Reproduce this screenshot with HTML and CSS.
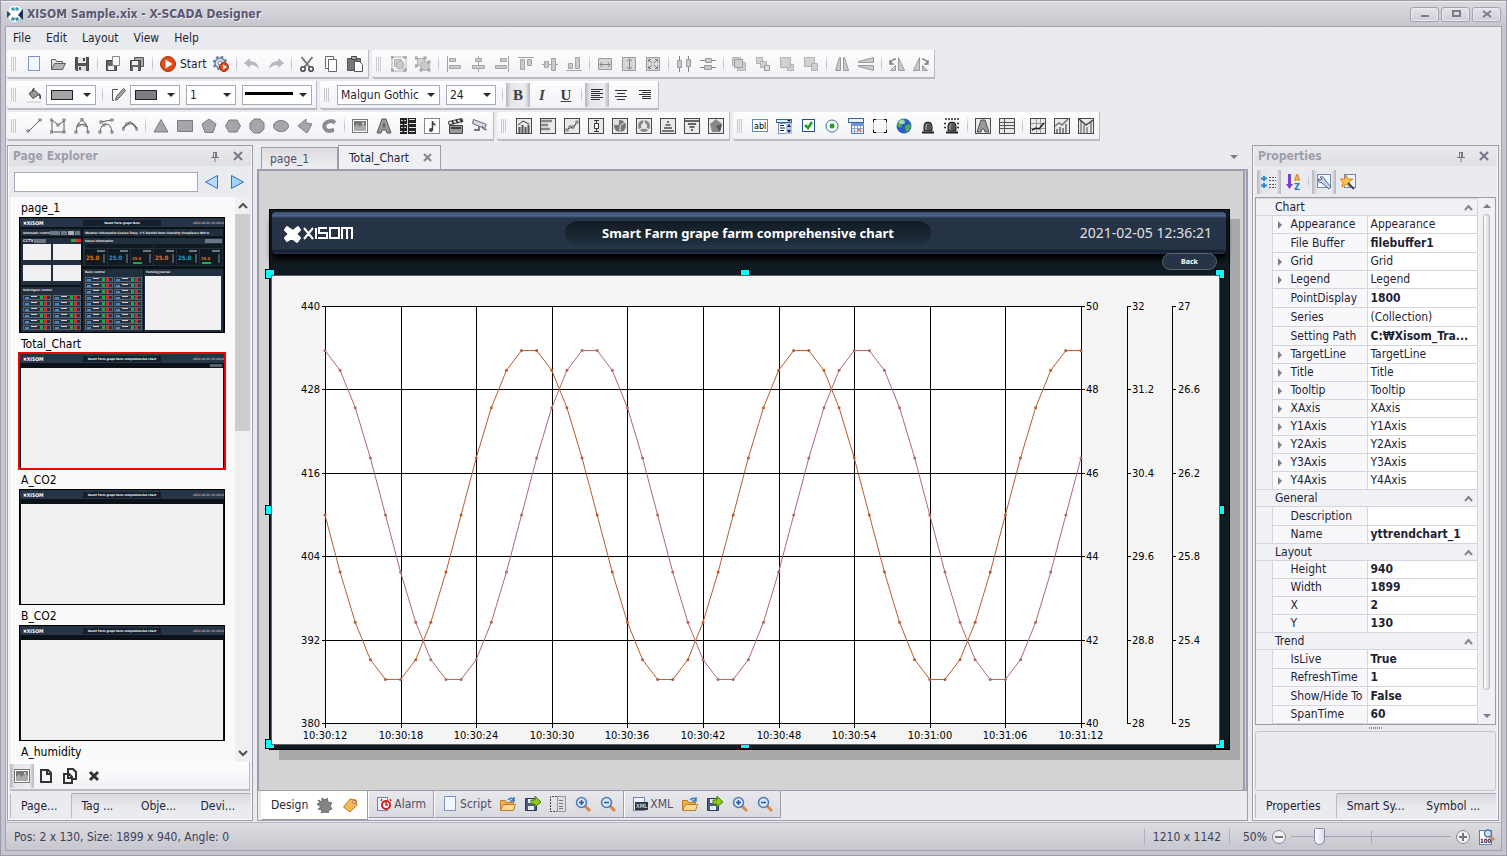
FILE: index.html
```html
<!DOCTYPE html>
<html lang="en">
<head>
<meta charset="UTF-8" />
<meta name="viewport" content="width=device-width, initial-scale=1" />
<title>XISOM Sample.xix - X-SCADA Designer</title>
<link rel="stylesheet" href="styles.css">
</head>
<body>

<div class="window">
  <header class="titlebar">
    <svg class="app-icon" width="16" height="16" viewBox="0 0 16 16"><path d="M5 0h6l3 3-1 10-4 3H6l-4-3V3z" fill="#fff"/><path d="M4 2l3-1 1 3-3 1zM9 1l3 1-1 3-3-1z" fill="#3aa0b8"/><path d="M4 14l3 1 1-3-3-1zM9 15l3-1-1-3-3 1z" fill="#2f8fae"/><path d="M0 5l4 3-4 4z" fill="#1d4b86"/><path d="M16 3v11l-5-5z" fill="#16305e"/></svg>
    <h1>XISOM Sample.xix - X-SCADA Designer</h1>
    <div class="window-buttons">
      <button aria-label="Minimize"><svg width="10" height="8"><path d="M1 6h8" stroke="#7b7b8b" stroke-width="2"/></svg></button>
      <button aria-label="Maximize"><svg width="10" height="8"><rect x="2" y="1" width="7" height="5" fill="none" stroke="#7b7b8b" stroke-width="2"/></svg></button>
      <button aria-label="Close"><svg width="10" height="8"><path d="M1 1l8 6M9 1L1 7" stroke="#7b7b8b" stroke-width="2"/></svg></button>
    </div>
  </header>

  <div class="client">
    <nav class="menu">
      <button>File</button><button>Edit</button><button>Layout</button><button>View</button><button>Help</button>
    </nav>

    <div class="toolbar-row">
      <div class="toolbar" data-icons="new open save | copyPage saveAll | start gear | undo redo | cut copy paste"></div>
      <div class="toolbar dim" data-icons="group ungroup | alignLeft alignCenter alignRight alignTop alignMiddle alignBottom | sameWidth sameHeight sameSize | spaceH spaceV | toFront forward front backward | flipH flipV | rotateLeft rotateRight"></div>
    </div>

    <div class="toolbar-row">
      <div class="toolbar">
        <span class="grip"></span>
        <button class="tool" aria-label="Fill colour" data-icon="bucket"></button>
        <span class="combo color"><select aria-label="Fill"><option></option></select><i class="swatch"></i></span>
        <span class="sep"></span>
        <button class="tool" aria-label="Line colour" data-icon="pencil"></button>
        <span class="combo color"><select aria-label="Line"><option></option></select><i class="swatch dark"></i></span>
        <span class="combo size"><select aria-label="Line width"><option>1</option></select></span>
        <span class="combo line"><select aria-label="Line style"><option></option></select><i class="stroke"></i></span>
      </div>
      <div class="toolbar">
        <span class="grip"></span>
        <span class="combo font"><select aria-label="Font"><option>Malgun Gothic</option></select></span>
        <span class="combo size"><select aria-label="Font size"><option>24</option></select></span>
        <span class="sep"></span>
        <button class="tool letter on"><b>B</b></button>
        <button class="tool letter"><em>I</em></button>
        <button class="tool letter"><u>U</u></button>
        <span class="sep"></span>
        <button class="tool on" aria-label="Left" data-icon="textLeft"></button>
        <button class="tool" aria-label="Center" data-icon="textCenter"></button>
        <button class="tool" aria-label="Right" data-icon="textRight"></button>
      </div>
    </div>

    <div class="toolbar-row">
      <div class="toolbar" data-icons="line polyline curve bezier arc | triangle rect pentagon hexagon octagon ellipse shape pie | image text qr sound movie camera"></div>
      <div class="toolbar" data-icons="chartBar chartRows chartLine chartBox chartPie chartDonut chartPyramid chartFunnel chartRadar"></div>
      <div class="toolbar" data-icons="textbox combobox check radio calendar frame globe alarm alarmOn | labelA table | trend area chartV"></div>
    </div>

    <main class="main">
      <section class="panel explorer">
        <header class="panel-head"><h2>Page Explorer</h2><button aria-label="Pin" data-icon="pin"></button><button aria-label="Close" data-icon="close"></button></header>
        <div class="search">
          <input type="text" aria-label="Search pages">
          <button aria-label="Previous" data-icon="prev"></button>
          <button aria-label="Next" data-icon="next"></button>
        </div>
        <div class="list-wrap">
          <div class="pages" id="pages"></div>
          <div class="vscroll">
            <svg width="10" height="8"><path d="M1 6l4-4 4 4" fill="none" stroke="#505050" stroke-width="2"/></svg>
            <i class="thumb"></i>
            <svg class="down" width="10" height="8"><path d="M1 2l4 4 4-4" fill="none" stroke="#505050" stroke-width="2"/></svg>
          </div>
        </div>
        <div class="page-tools">
          <button class="tool on" aria-label="Preview" data-icon="image"></button>
          <button class="tool" aria-label="New page" data-icon="pageNew"></button>
          <button class="tool" aria-label="Duplicate" data-icon="pageCopy"></button>
          <button class="tool" aria-label="Delete" data-icon="pageDelete"></button>
        </div>
        <div class="dock-tabs">
          <button class="active">Page...</button><button>Tag ...</button><button>Obje...</button><button>Devi...</button>
        </div>
      </section>

      <section class="document">
        <div class="doc-tabs">
          <button class="doc-tab">page_1</button>
          <button class="doc-tab active">Total_Chart <svg width="9" height="9"><path d="M1 1l7 7M8 1L1 8" stroke="#85858f" stroke-width="2"/></svg></button>
          <i class="arrow"></i>
        </div>
        <div class="surface">
          <div class="screen">
            <div class="screen-head">
              <svg class="brand" width="70" height="20" viewBox="0 0 70 20"><path d="M3 4l6 4 5-4 2 3-4 4 4 4-3 4-5-4-5 3-2-3 4-4-4-4z" fill="#fff" stroke="#fff" stroke-width="2" stroke-linejoin="round"/><path d="M20 5l9 11M29 5L20 16M32 5v11M43 5h-8v5h8v5h-9M46 5h9v10h-9zM58 16V5h10v11M63 6v10" fill="none" stroke="#fff" stroke-width="2"/></svg>
              <div class="screen-title">Smart Farm grape farm comprehensive chart</div>
              <time>2021-02-05 12:36:21</time>
            </div>
            <button class="back">Back</button>
            <i class="handle tl"></i><i class="handle tc"></i><i class="handle tr"></i>
            <i class="handle ml"></i><i class="handle mr"></i>
            <i class="handle bl"></i><i class="handle bc"></i><i class="handle br"></i>
            <svg class="chart" id="chart" width="949" height="470" viewBox="1 1 947 468"></svg>
          </div>
        </div>
        <div class="view-tabs">
          <div class="view-tab active"><button>Design</button><button aria-label="Settings" data-icon="gearGrey"></button><button aria-label="Tag" data-icon="tag"></button></div>
          <div class="view-tab"><button><span data-icon="alarmDoc"></span>Alarm</button></div>
          <div class="view-tab"><button><span data-icon="new"></span>Script</button><button aria-label="Open" data-icon="folder"></button><button aria-label="Export" data-icon="export"></button><button aria-label="Outline" data-icon="outline"></button><button aria-label="Zoom in" data-icon="zoomIn"></button><button aria-label="Zoom out" data-icon="zoomOut"></button></div>
          <div class="view-tab"><button><span data-icon="xml"></span>XML</button><button aria-label="Open" data-icon="folder"></button><button aria-label="Export" data-icon="export"></button><button aria-label="Zoom in" data-icon="zoomIn"></button><button aria-label="Zoom out" data-icon="zoomOut"></button></div>
        </div>
      </section>

      <section class="panel properties">
        <header class="panel-head"><h2>Properties</h2><button aria-label="Pin" data-icon="pin"></button><button aria-label="Close" data-icon="close"></button></header>
        <div class="prop-tools">
          <button class="tool on" aria-label="Categories" data-icon="categories"></button>
          <button class="tool" aria-label="Sort" data-icon="sortAZ"></button>
          <span class="sep"></span>
          <button class="tool on" aria-label="Properties" data-icon="wrench"></button>
          <button class="tool" aria-label="Events" data-icon="wand"></button>
        </div>
        <div class="prop-wrap">
          <table class="props" id="props"></table>
          <div class="prop-scroll"><i class="arrow up"></i><i class="thumb"></i><i class="arrow"></i></div>
        </div>
        <div class="splitter"></div>
        <div class="description"></div>
        <div class="dock-tabs">
          <button class="active">Properties</button><button>Smart Sy...</button><button>Symbol ...</button>
        </div>
      </section>
    </main>

    <footer class="status">
      <span>Pos: 2 x 130, Size: 1899 x 940, Angle: 0</span>
      <span class="dims">1210 x 1142</span>
      <label for="zoom">50%</label>
      <button aria-label="Zoom out" data-icon="minus"></button>
      <input type="range" id="zoom" min="0" max="320" value="50">
      <button aria-label="Zoom in" data-icon="plus"></button>
      <button aria-label="Actual size" data-icon="zoom100"></button>
    </footer>
  </div>
</div>

<script src="script.js"></script>
</body>
</html>
```
FILE: styles.css
```css
* {
  box-sizing: border-box;
}
body {
  margin: 0;
  font-family: "DejaVu Sans Condensed", "DejaVu Sans", "Noto Sans", sans-serif;
  font-stretch: condensed;
  font-size: 12px;
  line-height: 16px;
  color: #1f1f35;
}
button,
input,
select {
  font: inherit;
  color: inherit;
}
button {
  display: flex;
  align-items: center;
  justify-content: center;
  margin: 0;
  padding: 0;
  border: 0;
  background: none;
  white-space: nowrap;
}
svg {
  display: block;
  flex: none;
}
.window {
  display: flex;
  flex-direction: column;
  height: 100vh;
  min-height: 700px;
  padding: 0 4px 4px;
  border: 1px solid #9c9aa9;
  background: #c6c6d0;
  overflow: hidden;
}
.titlebar {
  display: flex;
  align-items: center;
  height: 25px;
  margin: 0 -4px;
  padding: 0 5px 0 6px;
  border-top: 1px solid #f0f0f4;
  background: linear-gradient(#d9d9de, #c6c6ce);
}
.titlebar h1 {
  flex: 1;
  margin: 0 0 0 4px;
  font-size: 12px;
  color: #5b5870;
  text-shadow: 1px 1px 0 #ededf2;
}
.window-buttons {
  display: flex;
  gap: 2px;
}
.window-buttons button {
  width: 29px;
  height: 15px;
  border: 1px solid #a3a3b0;
  border-radius: 3px;
  background: linear-gradient(#e4e4e9, #cfcfd7);
  box-shadow: inset 0 0 0 1px #eaeaef;
}

.client {
  flex: 1;
  min-height: 0;
  display: flex;
  flex-direction: column;
  border: 1px solid #a3a3b0;
  background: #eaebef;
}
.menu {
  display: flex;
  gap: 15px;
  height: 23px;
  padding: 0 7px 2px;
}
.toolbar-row {
  display: flex;
  gap: 3px;
  margin: 0 0 2px 1px;
}
.toolbar {
  display: flex;
  align-items: center;
  height: 29px;
  padding-right: 1px;
  border-right: 1px solid #b9bac4;
  border-bottom: 2px solid #b9bac4;
  border-radius: 3px 0 0 3px;
  background: linear-gradient(#fdfdfe, #f1f2f5);
}
.grip {
  width: 6px;
  height: 14px;
  margin: 0 5px 0 4px;
  background: repeating-linear-gradient(90deg, #c9c9d1 0, #c9c9d1 1px, #f8f8fa 1px, #f8f8fa 2px);
}
.tool {
  width: 24px;
  height: 24px;
}
.tool.on {
  background: linear-gradient(90deg, #b5b5c1, #e4e4ea 20%, #ececf1 80%, #b5b5c1);
}
.tool.wide {
  width: 53px;
  gap: 4px;
  justify-content: flex-start;
  padding-left: 4px;
}
.dim .tool {
  opacity: 0.75;
}
.letter {
  font-family: "Liberation Serif", serif;
  font-size: 15px;
  font-weight: bold;
  color: #404040;
}
.sep {
  width: 1px;
  height: 16px;
  margin: 0 3px;
  background: linear-gradient(#eee, #b9bac4, #eee);
}
.combo {
  position: relative;
  display: flex;
  width: 50px;
  height: 20px;
  margin-right: 6px;
}
.combo.color {
  margin-right: 3px;
}
.combo.size {
  margin-left: 3px;
}
.combo.font + .size {
  margin: 0 3px 0 0;
}
.combo.line {
  width: 70px;
  margin-right: 3px;
}
.combo.font {
  width: 103px;
  margin-left: 2px;
}
.combo select {
  appearance: none;
  width: 100%;
  padding: 0 3px;
  border: 1px solid #a9aab8;
  border-radius: 0;
  background: #fff;
}
.combo::after,
.arrow {
  width: 0;
  border: 4px solid transparent;
  border-top-color: #2a2a3c;
  border-bottom: 0;
}
.combo::after {
  content: "";
  position: absolute;
  right: 5px;
  top: 8px;
}
.swatch,
.stroke {
  position: absolute;
  left: 5px;
  top: 5px;
  width: 22px;
  height: 10px;
  border: 1px solid #1f1f35;
  background: #a5a5a5;
}
.swatch.dark {
  background: #7f7f7f;
}
.stroke {
  left: 3px;
  top: 7px;
  width: 48px;
  height: 3px;
  border: 0;
  background: #000;
}

.main {
  flex: 1;
  min-height: 0;
  display: flex;
  gap: 4px;
  margin-top: 2px;
  padding: 0 2px 0 1px;
}
.panel {
  display: flex;
  flex-direction: column;
  flex: none;
  width: 246px;
  padding: 0 2px 2px;
  border: 1px solid #9c9cab;
  box-shadow: inset 0 0 0 1px #f8f8fa;
}
.panel-head {
  display: flex;
  align-items: center;
  height: 20px;
  margin: 0 -1px;
  padding: 0 2px 0 4px;
  background: linear-gradient(#e9e9ed, #dfe0e4);
}
.panel-head h2 {
  flex: 1;
  margin: 0;
  font-size: 12px;
  color: #9d9eab;
}
.panel-head button {
  width: 23px;
}
.search {
  display: flex;
  align-items: center;
  height: 31px;
  padding-left: 4px;
}
.search input {
  width: 184px;
  height: 20px;
  border: 1px solid #a9aab8;
  background: #fff;
}
.search button {
  width: 25px;
  margin-left: 1px;
}
.list-wrap {
  flex: 1;
  min-height: 0;
  display: flex;
  background: #fafafa;
}
.pages {
  flex: 1;
  padding: 2px 0 0 9px;
  overflow: hidden;
}
.page {
  display: block;
  margin-bottom: 2px;
}
.page span {
  display: block;
  height: 18px;
  padding: 1px 0 0 2px;
  text-align: left;
  color: #000;
}
.page svg {
  outline: 1px solid #000;
  outline-offset: -1px;
}
.page.selected svg {
  outline: 2px solid #f00000;
}
.vscroll {
  display: flex;
  flex-direction: column;
  align-items: center;
  width: 15px;
  padding: 5px 0;
  background: #f0f0f0;
}
.vscroll .thumb {
  width: 15px;
  height: 217px;
  margin-top: 4px;
  background: #cdcdcd;
}
.vscroll .down {
  margin-top: auto;
}
.page-tools {
  display: flex;
  align-items: center;
  height: 29px;
  border-right: 1px solid #b9bac4;
  border-bottom: 2px solid #b9bac4;
  background: linear-gradient(#fdfdfe, #f1f2f5);
}
.dock-tabs {
  display: flex;
  height: 25px;
  margin-top: 2px;
}
.dock-tabs button {
  flex: 1;
  justify-content: flex-start;
  padding: 0 0 1px 10px;
  border-top: 1px solid #a9aab8;
  background: linear-gradient(#d9d9df, #eaebef 60%);
}
.dock-tabs .active {
  border-top-color: transparent;
  border-right: 1px solid #b9bac4;
  border-left: 1px solid #b9bac4;
  background: #eaebef;
}

.document {
  flex: 1;
  min-width: 0;
  display: flex;
  flex-direction: column;
}
.doc-tabs {
  display: flex;
  align-items: flex-end;
  height: 24px;
  padding-left: 4px;
}
.doc-tab {
  width: 77px;
  height: 22px;
  justify-content: flex-start;
  padding-left: 8px;
  border: 1px solid #9c9cab;
  border-bottom: 0;
  background: linear-gradient(#dcdce1, #eeeff2);
  color: #50506a;
}
.doc-tab.active {
  width: 103px;
  height: 24px;
  gap: 14px;
  padding-left: 10px;
  background: #f0f0f3;
  color: #1f1f35;
}
.doc-tabs .arrow {
  margin: 0 10px 10px auto;
}
.arrow {
  border-top-color: #7b7b8b;
}
.surface {
  flex: 1;
  min-height: 0;
  padding: 38px 0 0 10px;
  border: 2px solid #9c9cab;
  border-right: 5px double #9c9cab;
  border-bottom-width: 1px;
  background: #d3d3d3;
  overflow: hidden;
}
.screen {
  position: relative;
  width: 961px;
  height: 541px;
  padding: 2px 3px 0 2px;
  border: 1px solid #000;
  background: #111c22;
  box-shadow: 10px 10px 0 #a9a9a9;
}
.screen-head {
  display: grid;
  grid-template-columns: 1fr 366px 1fr;
  align-items: center;
  height: 42px;
  padding: 0 14px 0 12px;
  border-radius: 4px;
  background: linear-gradient(#3c5173, #4b648c 4px, #273346 6px, #273346 37px, #131c2b 39px, #26344c);
  box-shadow: 0 6px 6px #000;
  color: #fff;
}
.screen-title {
  height: 24px;
  border-radius: 12px;
  background: linear-gradient(#111b23, #203040);
  font: bold 13px/24px "Noto Sans", sans-serif;
  text-align: center;
}
.screen-head time {
  justify-self: end;
  font: 14px/24px "Noto Sans", sans-serif;
  color: #e0e0e0;
}
.back {
  position: absolute;
  right: 12px;
  top: 43px;
  width: 55px;
  height: 17px;
  border: 1px solid #5c6470;
  border-radius: 9px;
  background: #273346;
  color: #fff;
  font: bold 7px/8px "Noto Sans", sans-serif;
}
.chart {
  position: absolute;
  left: 1px;
  top: 65px;
  border: 1px solid #606060;
  background: #f4f4f4;
  font-size: 11px;
}
.handle {
  position: absolute;
  width: 10px;
  height: 10px;
  border: 1px solid #000;
  background: #0ff;
}
.tl, .ml, .bl {
  left: -5px;
}
.tc, .bc {
  left: 470px;
}
.tr, .mr, .br {
  left: 945px;
}
.tl, .tc, .tr {
  top: 59px;
}
.ml, .mr {
  top: 295px;
}
.bl, .bc, .br {
  top: 529px;
}
.view-tabs {
  display: flex;
  height: 30px;
  padding: 0 0 2px 3px;
  border: 1px solid #9c9cab;
  border-top: 0;
}
.view-tab {
  display: flex;
  align-items: center;
  gap: 9px;
  height: 27px;
  padding: 0 7px;
  border: 1px solid #9c9cab;
  border-top: 0;
  border-left-color: #fff;
  background: linear-gradient(#e8e8ec, #d9dadf);
  color: #50506a;
}
.view-tab button {
  gap: 2px;
}
.view-tab.active {
  height: 29px;
  padding: 0 9px;
  background: #fff;
  color: #1f1f35;
}

.properties {
  width: 247px;
}
.prop-tools {
  display: flex;
  align-items: center;
  height: 31px;
  padding-left: 2px;
}
.prop-wrap {
  flex: 1;
  min-height: 0;
  display: flex;
  border: 1px solid #9c9cab;
  background: #f0f1f4;
  overflow: hidden;
}
.props {
  width: 100%;
  min-width: 0;
  align-self: flex-start;
  table-layout: fixed;
  border-collapse: collapse;
}
.props td,
.props th {
  height: 18px;
  padding: 0;
  border: 1px solid #d5d6dd;
  font-weight: normal;
  text-align: left;
  line-height: 17px;
  white-space: nowrap;
  overflow: hidden;
}
.props .tall td,
.props .tall th {
  height: 19px;
}
.props .gutter {
  border-top: 0;
  border-bottom: 0;
  border-left: 0;
}
.props .name {
  position: relative;
  padding-left: 18px;
  background: #f8f8fb;
}
.props .value {
  padding-left: 3px;
  background: #fff;
}
.props .group th {
  position: relative;
  height: 17px;
  padding-left: 19px;
  border-left: 0;
  line-height: 16px;
}
.group svg {
  position: absolute;
  right: 4px;
  top: 5px;
}
.name.more::before {
  content: "";
  position: absolute;
  left: 5px;
  top: 5px;
  border: 4px solid transparent;
  border-left-color: #7b7b8b;
  border-right: 0;
}
.prop-scroll {
  display: flex;
  flex-direction: column;
  flex: none;
  align-items: center;
  width: 17px;
  padding: 6px 0;
}
.prop-scroll .thumb {
  flex: 1;
  width: 7px;
  margin: 6px 0 24px;
  border: 1px solid #b5b5c1;
  border-radius: 4px;
  background: linear-gradient(90deg, #fff, #d9d9df);
}
.arrow.up {
  border-top: 0;
  border-bottom: 4px solid #7b7b8b;
}
.splitter {
  height: 6px;
  width: 14px;
  margin: 0 auto;
  border: solid transparent;
  border-width: 2px 0;
  background: repeating-linear-gradient(90deg, #8d8d9b 0, #8d8d9b 1px, #eaebef 1px, #eaebef 2px) padding-box;
}
.description {
  height: 60px;
  border: 1px solid #c4c5ce;
  border-radius: 3px;
}

.status {
  display: flex;
  align-items: center;
  height: 28px;
  margin-top: 1px;
  padding: 0 2px 0 8px;
  border-top: 1px solid #b5b5c1;
  background: linear-gradient(#dcdce1, #c6c6ce);
  color: #3f3f58;
}
.dims {
  margin: 0 13px 0 auto;
  padding: 0 8px;
  border: solid #b0b0bc;
  border-width: 0 1px;
}
.status button {
  margin: 0 4px;
}
.status input {
  appearance: none;
  width: 160px;
  height: 18px;
  margin: 0;
  background: linear-gradient(#a9a9b5, #a9a9b5) center / 100% 1px no-repeat, linear-gradient(#a9a9b5, #a9a9b5) center / 1px 12px no-repeat;
}
.status input::-webkit-slider-thumb {
  appearance: none;
  width: 11px;
  height: 17px;
  background: linear-gradient(90deg, #fff, #d8def5);
  border: 1px solid #85859b;
  border-radius: 2px 2px 6px 6px;
}
```
FILE: script.js
```js
const D = '#5f5f5f';
const G = '#a6a6aa';

function box(inner) {
  return `<rect x=".5" y=".5" width="15" height="15" fill="#e9e9e9" stroke="#4a4a4a"/>${inner}`;
}
function sq(x, y) {
  return `<rect x="${x}" y="${y}" width="2" height="2" fill="#fff" stroke="#555" stroke-width=".8"/>`;
}
function lines(d, color, width, dash) {
  return `<path d="${d}" fill="none" stroke="${color || D}" stroke-width="${width || 1}"${dash ? ` stroke-dasharray="${dash}"` : ''}/>`;
}
function solid(d, fill, stroke) {
  return `<path d="${d}" fill="${fill || G}" stroke="${stroke || '#7c7c80'}"/>`;
}
function lens(sign) {
  return `<path d="M10 10l5 5" stroke="#d98a4a" stroke-width="3"/><circle cx="6.5" cy="6.5" r="5" fill="#d5e6fb" stroke="#5577ad" stroke-width="1.5"/>${lines(sign, '#2454a8', 1.5)}`;
}
function two(a, b) {
  return solid(a, '#c4c4c4', '#9a9a9a') + solid(b, '#c4c4c4', '#9a9a9a');
}
const bell = '<path d="M4 13V8a4 4 0 018 0v5z" fill="#555" stroke="#222"/><path d="M6 12V8l1-2" stroke="#bbb" fill="none"/><path d="M2 14.5h12" stroke="#222" stroke-width="2"/>';

const icons = {
  new: '<rect x="2.5" y=".5" width="11" height="14" fill="#f3f7ff" stroke="#8094cc"/>',
  open: solid('M1.5 13V3.5h4l1 2h6V8', '#e4e4e4', D) + solid('M1.5 13.5l3-6h11l-3 6z', '#b5b5b5', D),
  save: solid('M1.5 1.5h13v13h-12l-1-1z', '#555', '#444') + '<path d="M4 1h8v6H4z" fill="#e6e6e6"/><path d="M4 10h8v5H4z" fill="#ddd"/><path d="M5 11h2v3H5zM9 2h2v3H9z" fill="#444"/>',
  copyPage: solid('M1.5 4.5h10v10h-10z', '#666', '#444') + '<path d="M3 10h6v4H3z" fill="#eee"/>' + solid('M7.5 .5h7v9h-7z', '#f6f6f6', '#888'),
  saveAll: solid('M5.5 1.5h9v9h-9z', '#aaa', '#555') + solid('M1.5 4.5h10v10h-10z', '#666', '#444') + '<path d="M3 5h6v4H3zM4 11h5v4H4z" fill="#eee"/>',
  start: '<circle cx="8" cy="8" r="7.5" fill="#e04a1c" stroke="#a03010"/><path d="M5.5 3.5l7 4.5-7 4.5z" fill="#fff"/>',
  gear: '<circle cx="7" cy="7" r="5" fill="#dce4f0" stroke="#6f7f99" stroke-width="1.5"/><circle cx="7" cy="7" r="6.3" fill="none" stroke="#6f7f99" stroke-width="2" stroke-dasharray="2.5 2.45"/><circle cx="7" cy="7" r="2" fill="#fff" stroke="#6f7f99"/><circle cx="11" cy="11" r="4.5" fill="#e04a1c" stroke="#a03010"/><path d="M10 8.5l4 2.5-4 2.5z" fill="#fff"/>',
  undo: '<path d="M6 2v3q8 0 9 8-3-4-9-4v3L0 7z" fill="#b9b9bd"/>',
  redo: '<path d="M10 2v3Q2 5 1 13q3-4 9-4v3l6-5z" fill="#b9b9bd"/>',
  cut: lines('M2.5 1l8 10M13.5 1l-8 10', '#777', 2) + '<circle cx="4" cy="13" r="2.2" fill="none" stroke="#444" stroke-width="1.5"/><circle cx="12" cy="13" r="2.2" fill="none" stroke="#444" stroke-width="1.5"/>',
  copy: solid('M2.5 .5h8v12h-8z', '#fff', '#666') + solid('M5.5 3.5h8v12h-8z', '#fff', '#666'),
  paste: solid('M.5 2.5h13v12H.5z', '#777', '#555') + solid('M4.5 .5h5v3h-5z', '#aaa', '#444') + solid('M7.5 5.5h5l3 3v7h-8z', '#fff', '#555'),

  group: solid('M3.5 3.5h7v7h-7z', '#c9c9c9', '#999') + '<circle cx="9" cy="9" r="4" fill="#bbb" stroke="#999"/>' + lines('M1 1h14v14H1z', '#999') + sq(0, 0) + sq(13, 0) + sq(0, 13) + sq(13, 13),
  ungroup: solid('M2.5 2.5h7v7h-7z', '#c9c9c9', '#999') + '<circle cx="10" cy="10" r="4.5" fill="#bbb" stroke="#999"/>' + sq(0, 1) + sq(9, 1) + sq(0, 9) + sq(13, 5) + sq(5, 13) + sq(13, 13),
  alignLeft: lines('M1.5 0v16', '#888') + solid('M3.5 2.5h6v3h-6zM3.5 9.5h11v3h-11z', '#bbb', '#8a8a8a'),
  alignCenter: lines('M8.5 0v16', '#888') + solid('M5.5 2.5h6v3h-6zM2.5 9.5h12v3h-12z', '#bbb', '#8a8a8a'),
  alignRight: lines('M14.5 0v16', '#888') + solid('M6.5 2.5h6v3h-6zM1.5 9.5h11v3h-11z', '#bbb', '#8a8a8a'),
  alignTop: lines('M0 1.5h16', '#888') + solid('M2.5 3.5h4v10h-4zM9.5 3.5h4v6h-4z', '#bbb', '#8a8a8a'),
  alignMiddle: lines('M0 8.5h16', '#888') + solid('M2.5 5.5h4v6h-4zM9.5 2.5h4v12h-4z', '#bbb', '#8a8a8a'),
  alignBottom: lines('M0 14.5h16', '#888') + solid('M2.5 7.5h4v5h-4zM9.5 1.5h4v11h-4z', '#bbb', '#8a8a8a'),
  sameWidth: solid('M1.5 2.5h13v11h-13z', '#ccc') + lines('M3 8.5h10M5 6L3 8.5 5 11M11 6l2 2.5-2 2.5'),
  sameHeight: solid('M1.5 1.5h13v13h-13z', '#ccc') + lines('M8.5 3v10M6 5l2.5-2L11 5M6 11l2.5 2 2.5-2'),
  sameSize: solid('M1.5 1.5h13v13h-13z', '#ccc') + lines('M4 4l3 3M12 4L9 7M4 12l3-3M12 12L9 9M3.5 6V3.5H6M10 3.5h2.5V6M3.5 10v2.5H6M10 12.5h2.5V10'),
  spaceH: lines('M3.5 0v16M12.5 0v16') + solid('M1.5 4.5h4v7h-4zM10.5 3.5h4v7h-4z', '#bbb'),
  spaceV: lines('M0 4.5h16M0 11.5h16') + solid('M5.5 2.5h6v4h-6zM4.5 9.5h7v4h-7z', '#bbb'),
  toFront: two('M1.5 1.5h8v8h-8z', 'M6.5 6.5h8v8h-8z') + solid('M3.5 3.5h8v8h-8z', '#c4c4c4'),
  forward: two('M1.5 1.5h6v6h-6z', 'M5.5 5.5h6v6h-6z') + solid('M9.5 9.5h5v5h-5z', '#d5d5d5'),
  front: two('M8.5 8.5h6v6h-6z', 'M1.5 1.5h10v10h-10z'),
  backward: two('M1.5 1.5h10v9h-10z', 'M8.5 7.5h6v7h-6z'),
  flipH: solid('M1.5 14.5l4-13h1v13zM14.5 14.5l-4-13h-1v13z', '#bbb'),
  flipV: solid('M15.5 1.5l-15 4v1h15zM15.5 14.5l-15-4v-1h15z', '#bbb'),
  rotateLeft: solid('M9.5 1.5v13h6zM6.5 14.5v-5l-5 5z', '#bbb') + lines('M2 7q1-4 5-4M1 4v4h4', D, 1.5),
  rotateRight: solid('M6.5 1.5v13h-6zM9.5 14.5v-5l5 5z', '#bbb') + lines('M14 7q-1-4-5-4M15 4v4h-4', D, 1.5),

  bucket: solid('M3 6.5l5-4 5 5-6 4z', '#999', '#444') + lines('M6 5l2-4M13 7q2 2 1 5', '#444', 1.5) + '<path d="M1 14h14v2H1z" fill="#ddd"/>',
  pencil: lines('M8 2.5H2.5v11H4', '#555') + solid('M5.5 13.5l1-4 7-8 2 2-7 8z', '#aaa', '#555'),
  textLeft: lines('M2 2.5h12M2 4.5h9M2 6.5h12M2 8.5h9M2 10.5h12M2 12.5h9', '#333'),
  textCenter: lines('M2 3.5h12M4 6.5h8M2 9.5h12M4 12.5h8', '#333'),
  textRight: lines('M2 3.5h12M5 5.5h9M2 7.5h12M5 9.5h9M5 11.5h9', '#333'),

  line: lines('M2 14L14 2') + sq(1, 12) + sq(13, 1),
  polyline: lines('M2 2v12h12V3L8 7 2 2') + sq(0, 1) + sq(13, 1) + sq(0, 13) + sq(13, 13) + sq(7, 6),
  curve: lines('M2 14C4-1 12-1 14 14M2 9q6-5 12 0') + sq(7, 0) + sq(1, 13) + sq(13, 13) + sq(4, 6) + sq(10, 6),
  bezier: lines('M2 14q1-8 6-8t6 8M3 4l10-2') + sq(2, 3) + sq(13, 1) + sq(1, 13) + sq(13, 13) + sq(5, 6),
  arc: lines('M1 11q7-12 14 0', D, 1.5) + sq(0, 10) + sq(14, 10) + sq(7, 4) + sq(4, 5),
  triangle: solid('M8 1.5l7 12.5H1z'),
  rect: solid('M.5 2.5h15v11H.5z'),
  pentagon: solid('M8 1l7 5-3 8.5H4L1 6z'),
  hexagon: solid('M4 2h8l3.5 6-3.5 6H4L.5 8z'),
  octagon: solid('M5 1h6l4 4v6l-4 4H5l-4-4V5z'),
  ellipse: '<ellipse cx="8" cy="8" rx="7.5" ry="5.5" fill="#a6a6aa" stroke="#7c7c80"/>',
  shape: solid('M1 8l8-7v4l6 1-5 9z'),
  pie: lines('M14 5A6 5 0 108 13l5-1', '#8c8c90', 4),
  image: '<rect x=".5" y="1.5" width="15" height="13" fill="#fff" stroke="#777"/><rect x="2" y="3" width="12" height="10" fill="#777"/><path d="M2 13V9l3-3 3 3 3-4 3 3v5z" fill="#aaa"/><circle cx="11" cy="5" r="1" fill="#ddd"/>',
  text: '<path d="M1 15L6 1h4l5 14h-4l-1-3H6l-1 3zM7 9h2L8 5z" fill="#999" stroke="#555" fill-rule="evenodd"/>',
  qr: '<path d="M0 0h16v16H0z" fill="#222"/>' + lines('M1 2.5h5M9 1.5h6M0 6.5h7M9 5.5h7M1 9.5h5M9 9.5h7M0 13.5h7M9 13.5h6M7.5 0v16', '#ddd') + lines('M3.5 0v16', '#222', 1.5),
  sound: '<rect x=".5" y=".5" width="15" height="15" fill="#fff" stroke="#888"/>' + lines('M8.5 12V3q0 3 3 4', '#444', 1.5) + '<circle cx="7" cy="12" r="2" fill="#444"/>',
  movie: solid('M1.5 7.5h13v8h-13z', '#999', '#444') + solid('M.5 3.5L14 .5l1 3-14 3.5z', '#ddd', '#444') + lines('M4 3l2 3M8 2l2 3M12 1l2 3M3 10h10', '#222', 1.5),
  camera: solid('M1.5 1.5l13 5-2 4-12-5z', '#d5dae4', '#667') + solid('M10 8l5 4-4-1z', '#999') + lines('M7 8v4H2', '#778', 2),

  chartBar: box(lines('M3.5 15V9M6.5 15V7M9.5 15V9M12.5 15V7', '#555', 2) + lines('M2 7l5-4 6 3', '#333')),
  chartRows: box(lines('M1 3h11M1 7h7M1 11h9', '#888', 2.5)),
  chartLine: box(lines('M3 12l3-3 3 1 4-6', '#333') + sq(2, 11) + sq(5, 8) + sq(8, 8) + sq(12, 3)),
  chartBox: box(lines('M8.5 2v12M6 2.5h5M6 13.5h5', '#333') + solid('M6.5 5.5h4v5h-4z', '#fff', '#333')),
  chartPie: box('<circle cx="8" cy="8" r="6" fill="#777"/><path d="M7 7V1A6 6 0 001 7z" fill="#ddd"/>' + lines('M8 8l5-4M8 8v6', '#eee')),
  chartDonut: box('<circle cx="8" cy="8" r="4.5" fill="none" stroke="#888" stroke-width="3"/>' + lines('M8 1v4M3 12l3-2M13 12l-3-2', '#eee', 1.5)),
  chartPyramid: box(lines('M7 4h2M5.5 7h5M4 10h8M2 13h12', '#777', 2)),
  chartFunnel: box(lines('M1 3h14M4 6h8M5.5 9h5M7 12h2', '#666', 2)),
  chartRadar: box('<path d="M8 1l6 5-2 8H4L2 6z" fill="#888"/><path d="M8 8l6-2-2 8z" fill="#555"/>'),

  textbox: '<rect x=".5" y="1.5" width="15" height="12" fill="#fff" stroke="#5b8db8"/><text x="2" y="11" font-size="9" fill="#000">abl</text>',
  combobox: '<rect x=".5" y="1.5" width="15" height="3" fill="#e8f0fa" stroke="#38689a"/><rect x="2.5" y="5.5" width="13" height="10" fill="#fff" stroke="#7c92c4"/>' + lines('M4 7.5h4M4 10h5M4 12.5h4', '#222') + '<path d="M10 5h6v11h-6z" fill="#b4c6ee"/><path d="M11 9l2-3 2 3zM11 12l2 3 2-3zM11 2h4l-2 2z" fill="#123"/>',
  check: '<rect x="2.5" y="1.5" width="12" height="12" fill="#fff" stroke="#1f5080"/>' + lines('M5 7l3 3 4-6', '#21a121', 2.5),
  radio: '<circle cx="8" cy="8" r="6" fill="#fff" stroke="#336a94"/><circle cx="8" cy="8" r="2.5" fill="#21a121"/>',
  calendar: '<rect x=".5" y=".5" width="15" height="4" fill="#e8f0fa" stroke="#38689a"/><rect x="3.5" y="5.5" width="12" height="10" fill="#fff" stroke="#557ac0"/><path d="M3 5h13v3H3z" fill="#6d94da"/>' + lines('M4 10.5h11M4 13h11M6.5 8v7M9.5 8v7M12.5 8v7', '#8aa4d6') + '<path d="M10 11h3v2h-3z" fill="#e67c4a"/>',
  frame: '<rect x="1.5" y="1.5" width="13" height="13" fill="#f7f7f7" stroke="#777" stroke-dasharray="1 1"/>' + lines('M1.5 4V1.5H4M12 1.5h2.5V4M14.5 12v2.5H12M4 14.5H1.5V12', '#000'),
  globe: '<circle cx="8" cy="8" r="7.5" fill="#2a5cc4"/><path d="M2 4q3-4 6-3l1 4-3 1-1 4-4-2zM9 8l4-2 2 2-2 5-3 1z" fill="#4fb04a"/><ellipse cx="6" cy="4" rx="3" ry="2" fill="#cde8ff" opacity=".7"/>',
  alarm: bell,
  alarmOn: bell + lines('M1 1h14M0 5.5h3M13 5.5h3M0 9.5h3M13 9.5h3', '#333', 1.5, '2 1'),
  labelA: box('<path d="M2 14L6 2h4l4 12h-4l-1-3H7l-1 3z" fill="#999" stroke="#555"/>'),
  table: box(lines('M1 4.5h14M1 7.5h14M1 10.5h14M5.5 1v14', '#555')),
  trend: box(lines('M1 5.5h14M1 10.5h14M6.5 1v14M10.5 1v14', '#999') + lines('M2 12l4-2 3 1 5-6', '#222', 1.5)),
  area: box(lines('M3 15v-4M6 15V9M9 15v-5M12 15V6', '#888', 2) + lines('M1 8l4-3 3 2 6-6', '#777', 1.5)),
  chartV: box(lines('M3 15V3M6 15V7M9 15V9M13 15V4', '#999', 2) + lines('M1 1l7 6 7-5', '#444', 1.5)),

  pin: lines('M6.5 4v6M9.5 4v6M6 4.5h4M4 9.5h8M8 10v4M8.5 4v6', '#777787'),
  close: lines('M4 4l8 8M12 4l-8 8', '#777787', 2),
  prev: '<path d="M13.5 1.5v13L1.5 8z" fill="#b4dcf8" stroke="#3a6fb8"/>',
  next: '<path d="M1.5 1.5v13l12-6.5z" fill="#9fd0f6" stroke="#3a6fb8"/>',
  pageNew: lines('M3 2h7l3 3v9H3zM9 2v4h4', '#333', 2),
  pageCopy: lines('M2 6h5l3 3v6H2zM6 5V1h5l3 3v7h-3M6 6v4h4', '#333', 2),
  pageDelete: lines('M4 4l8 8M12 4l-8 8', '#333', 3),
  gearGrey: '<path d="M1 3l4 2V1l3 2 2-2 1 4 4 1-2 3 2 3-3 1-1 3-3-1-4 1 1-3-4-1 3-2-4-3 3-1z" fill="#858585" stroke="#6c6c6c"/>',
  tag: '<path d="M1.5 10L8 2l6 1 1 5-7 7z" fill="#f5b955" stroke="#b87a20"/><circle cx="12" cy="5" r="1.5" fill="#fff" stroke="#a66"/>',
  alarmDoc: '<rect x="1.5" y="1.5" width="10" height="13" fill="#eef3ff" stroke="#6d83bd"/><circle cx="10" cy="9" r="4" fill="#fff" stroke="#c22" stroke-width="2"/>' + lines('M10 6v3h2M6 3l-1 2M14 3l1 2', '#c22', 1.5),
  folder: solid('M.5 14V4.5h5l1 2h7V14', '#f0b050', '#c07a24') + solid('M.5 14.5l3-6h12l-2 6z', '#ffd998', '#c07a24') + lines('M8 4q4-4 6 1M14 1v4h-4', '#3c78b8', 1.5),
  export: solid('M.5 2.5h11v12H.5z', '#4a5a80', '#2c3858') + '<path d="M3 3h6v4H3zM3 10h6v4H3z" fill="#e6eaf5"/><path d="M6 4h4V0l6 6-6 5V8H6z" fill="#8fc81e" stroke="#4f7f10"/>',
  outline: lines('M7 .5H.5v15H7', '#444', 1, '2 1') + solid('M7.5 .5h8v15h-8z', '#ddd', '#999') + lines('M9 4.5h4M9 7.5h4M9 10.5h4M9 12.5h4', '#777'),
  zoomIn: lens('M4 6.5h5M6.5 4v5'),
  zoomOut: lens('M4 6.5h5'),
  xml: '<rect x="1.5" y="1.5" width="11" height="13" fill="#eef3ff" stroke="#6d83bd"/><path d="M3 6h13v8H3z" fill="#333"/><text x="4" y="12" font-size="6" fill="#fff">XML</text>',
  categories: lines('M0 4.5h6M3 2v5M0 11.5h6M3 9v5', '#2a86d0', 2) + lines('M8 3.5h7M8 6.5h7M8 10.5h7M8 13.5h7', '#555', 1, '2 1'),
  sortAZ: '<path d="M3 0h3v10h2l-3.5 5L1 10h2z" fill="#7a3fd0"/><text x="9" y="7" font-size="9" font-weight="bold" fill="#e8900c">A</text><text x="9" y="16" font-size="9" font-weight="bold" fill="#1e78c8">Z</text>',
  wrench: '<rect x="1.5" y=".5" width="13" height="13" fill="#f4f7fd" stroke="#7788aa"/><path d="M4 3q4-1 5 3l6 7-2 2-7-6q-4 0-4-4l3 1 1-1z" fill="#c6d3e6" stroke="#556a8a"/>',
  wand: '<rect x="4.5" y=".5" width="11" height="13" fill="#eef3fd" stroke="#7788aa"/><path d="M6 1l2 4h5L9 8l1 5-4-3-4 3 1-5-3-3h5z" fill="#ffc24a" stroke="#d9871a"/>' + lines('M8 9l6 6', '#445', 2),
  minus: '<circle cx="8" cy="8" r="6.5" fill="#f1f1f4" stroke="#888896"/>' + lines('M4 8h8', '#777', 2),
  plus: '<circle cx="8" cy="8" r="6.5" fill="#f1f1f4" stroke="#888896"/>' + lines('M4 8h8M8 4v8', '#777', 2),
  zoom100: '<rect x=".5" y="1.5" width="12" height="14" fill="#fff" stroke="#5f7cb8"/><text x="1" y="14" font-size="6" font-weight="bold" fill="#222">100</text><path d="M11 7l4 4" stroke="#d98a4a" stroke-width="3"/><circle cx="9" cy="4.5" r="3.5" fill="#cfe2fa" stroke="#5577ad" stroke-width="1.5"/>'
};

function svg(name) {
  return `<svg width="16" height="16" viewBox="0 0 16 16">${icons[name]}</svg>`;
}

document.querySelectorAll('[data-icons]').forEach(bar => {
  let html = '<span class="grip"></span>';
  bar.dataset.icons.split(' ').forEach(name => {
    if (name === '|') {
      html += '<span class="sep"></span>';
    } else if (name === 'start') {
      html += `<button class="tool wide">${svg(name)}Start</button>`;
    } else {
      html += `<button class="tool" aria-label="${name}">${svg(name)}</button>`;
    }
  });
  bar.innerHTML = html;
});
document.querySelectorAll('[data-icon]').forEach(el => {
  el.innerHTML = svg(el.dataset.icon);
});

// page thumbnails
function rect(x, y, w, h, fill) {
  return `<rect x="${x}" y="${y}" width="${w}" height="${h}" fill="${fill}"/>`;
}
function label(x, y, size, text, fill) {
  return `<text x="${x}" y="${y}" font-size="${size}" font-weight="bold" fill="${fill || '#e8e8e8'}">${text}</text>`;
}
function units(x, y, rows) {
  let out = '';
  for (let i = 0; i < rows; i++) {
    const top = y + i * 6;
    out += rect(x, top, 28, 5, '#5b6470') + rect(x + 1, top + 1, 26, 3, '#26323f') + rect(x + 2, top + 2, 4, 2, '#3a8fd8') + rect(x + 8, top + 1, 6, 1, '#ccc') + rect(x + 17, top + 1, 3, 3, '#1fa94a') + rect(x + 21, top + 1, 3, 3, '#e02828');
  }
  return out;
}
function dashboard() {
  let out = rect(2, 12, 60, 56, '#202e3e') + rect(2, 70, 60, 45, '#202e3e') + rect(64, 12, 140, 37, '#202e3e') + rect(64, 52, 60, 63, '#202e3e') + rect(125, 52, 79, 63, '#202e3e');
  out += label(4, 17, 3, 'Automatic control') + label(66, 17, 3, 'Weather information Season Temp. 4°C Rainfall 0mm Humidity Compliance 800 m') + rect(2, 19, 202, 2, '#0d151b');
  out += rect(31, 14, 10, 4, '#6d7682') + rect(42, 14, 6, 4, '#6d7682') + rect(49, 14, 6, 4, '#aab0b8') + rect(56, 14, 5, 4, '#6d7682') + label(4, 25, 4, 'CCTV') + rect(15, 22, 12, 4, '#6d7682') + rect(52, 22, 5, 3, '#1fa94a') + rect(57, 22, 5, 3, '#e02828');
  out += label(66, 25, 3, 'House information') + rect(186, 22, 17, 4, '#6d7682') + rect(66, 27, 68, 4, '#101a20') + rect(135, 27, 68, 4, '#101a20');
  [[4, 27], [34, 27], [4, 48], [34, 48]].forEach(p => {
    out += rect(p[0], p[1], 28, 16, '#f0f0f0');
  });
  [66, 89, 112, 135, 158, 181].forEach((x, i) => {
    out += rect(x, 32, 22, 16, '#101a20') + label(x + 1, 43, i % 3 === 2 ? 4 : 6, '25.0', ['#e87818', '#20a0d8', '#e87818'][i % 3]) + rect(x + 12, 33, 8, 2, '#6d7682') + rect(x + 18, 37, 2, 9, '#4a545e');
    if (i % 3 === 2) out += rect(x + 2, 45, 9, 2, '#1fa94a');
  });
  out += label(66, 56, 3, 'Basic control') + label(127, 56, 3, 'Farming journal') + label(4, 74, 3, 'Switchgear control');
  return out + units(4, 78, 6) + units(34, 78, 6) + units(66, 60, 9) + units(95, 60, 9) + rect(126, 59, 76, 54, '#f0f0f0');
}
function thumbnail(i) {
  const body = i === 0 ? dashboard() : rect(2, 15, 202, 100, '#f0f0f0') + (i === 1 ? rect(191, 11, 12, 3, '#59616d') : '');
  const title = i === 0 ? 'Smart Farm grape farm' : 'Smart Farm grape farm comprehensive chart';
  return `<svg width="206" height="116" viewBox="0 0 206 116">${rect(0, 0, 206, 116, '#0b1318') + rect(1, 1, 204, 9, '#273346') + rect(64, 3, 78, 6, '#15202a')}
    ${label(4, 8, 5, '✖XISOM', '#fff')}<text x="103" y="7" font-size="3" font-weight="bold" text-anchor="middle" fill="#fff">${title}</text>${label(174, 7, 3, '2021-02-05 12:36:21', '#aaa')}${body}</svg>`;
}
// the last one is scrolled out of view, only its caption shows
const pages = ['page_1', 'Total_Chart', 'A_CO2', 'B_CO2', 'A_humidity'];
document.getElementById('pages').innerHTML = pages.map((name, i) =>
  `<button class="page${i === 1 ? ' selected' : ''}"><span>${name}</span>${i < 4 ? thumbnail(i) : ''}</button>`
).join('');

// trend chart
const plot = { left: 54, right: 810, top: 31, bottom: 448 };
let chart = rect(plot.left, plot.top, plot.right - plot.left, plot.bottom - plot.top, '#fff');
let grid = '', text = '';
const scales = [
  { x: plot.left, at: 49, anchor: 'end', values: [440, 428, 416, 404, 392, 380] },
  { x: plot.right, at: 815, values: [50, 48, 46, 44, 42, 40] },
  { x: 856, at: 861, values: ['32', '31.2', '30.4', '29.6', '28.8', '28'] },
  { x: 901, at: 907, values: ['27', '26.6', '26.2', '25.8', '25.4', '25'] }
];
['10:30:12', '10:30:18', '10:30:24', '10:30:30', '10:30:36', '10:30:42', '10:30:48', '10:30:54', '10:31:00', '10:31:06', '10:31:12'].forEach((t, i) => {
  const x = Math.round(plot.left + i * 75.6);
  grid += `M${x + 0.5} ${plot.top}V${plot.bottom + 5}`;
  text += `<text x="${x}" y="464" text-anchor="middle">${t}</text>`;
});
scales.forEach((s, n) => {
  if (n > 1) grid += `M${s.x + 0.5} ${plot.top}V${plot.bottom}`;
  s.values.forEach((v, i) => {
    const y = Math.round(plot.top + i * 83.4);
    grid += n === 0 ? `M${plot.left - 3} ${y + 0.5}H${plot.right + 4}` : `M${s.x} ${y + 0.5}h4`;
    text += `<text x="${s.at}" y="${y + 4}" text-anchor="${s.anchor || 'start'}">${v}</text>`;
  });
});
chart += `<path d="${grid}" stroke="#000"/>`;
[[0, '#b95c2f'], [4, '#b06868']].forEach(([shift, color]) => {
  const points = [];
  for (let k = 0; k <= 50; k++) {
    points.push([plot.left + k * 15.12, 240 + 167 * Math.sin((k - shift) * Math.PI / 9)]);
  }
  chart += `<polyline points="${points.join(' ')}" fill="none" stroke="${color}"/>`;
  points.forEach(p => {
    chart += `<circle cx="${p[0]}" cy="${p[1]}" r="1.5" fill="${color}"/>`;
  });
});
document.getElementById('chart').innerHTML = chart + text;

// property grid: [name, value, kind], + expandable, b bold value, n bold number in a low row
const groups = {
  Chart: [['Appearance', 'Appearance', '+'], ['File Buffer', 'filebuffer1', 'b'], ['Grid', 'Grid', '+'], ['Legend', 'Legend', '+'], ['PointDisplay', '1800', 'b'], ['Series', '(Collection)', ''], ['Setting Path', 'C:₩Xisom_Tra...', 'b'], ['TargetLine', 'TargetLine', '+'], ['Title', 'Title', '+'], ['Tooltip', 'Tooltip', '+'], ['XAxis', 'XAxis', '+'], ['Y1Axis', 'Y1Axis', '+'], ['Y2Axis', 'Y2Axis', '+'], ['Y3Axis', 'Y3Axis', '+'], ['Y4Axis', 'Y4Axis', '+']],
  General: [['Description', '', ''], ['Name', 'yttrendchart_1', 'n']],
  Layout: [['Height', '940', 'n'], ['Width', '1899', 'n'], ['X', '2', 'n'], ['Y', '130', 'n']],
  Trend: [['IsLive', 'True', 'b'], ['RefreshTime', '1', 'n'], ['Show/Hide To', 'False', 'b'], ['SpanTime', '60', 'n'], ['', '', '']]
};
let rows = '<colgroup><col width="16"><col width="95"><col></colgroup>';
for (const group in groups) {
  rows += `<tr class="group"><th colspan="3">${group}<svg width="9" height="7"><path d="M1 6l3.5-4L8 6" fill="none" stroke="#85858f" stroke-width="2"/></svg></th></tr>`;
  groups[group].forEach(([name, value, kind]) => {
    const bold = kind === 'b' || kind === 'n';
    rows += `<tr class="${kind === '+' || kind === 'n' ? '' : 'tall'}"><td class="gutter"></td><th class="name${kind === '+' ? ' more' : ''}">${name}</th><td class="value">${bold ? `<b>${value}</b>` : value}</td></tr>`;
  });
}
document.getElementById('props').innerHTML = rows;
```
